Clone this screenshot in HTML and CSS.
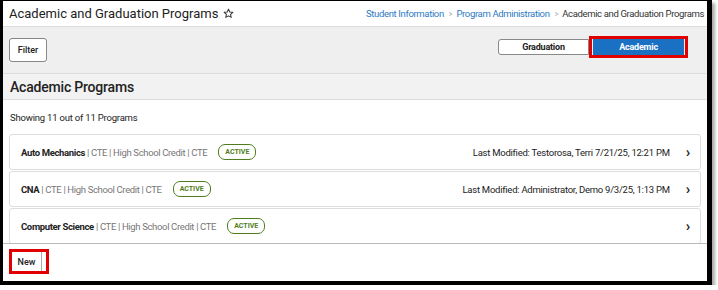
FILE: index.html
```html
<!DOCTYPE html>
<html>
<head>
    <title>Academic and Graduation Programs</title>
    <link rel="stylesheet" href="styles.css">
</head>
<body>
    <div class="frame">
        <div class="page-header">
            <h1 class="page-title">Academic and Graduation Programs
                <svg class="star" width="11" height="11" viewBox="0 0 24 24"><path d="M12 2.5l2.9 6.2 6.6.7-5 4.5 1.4 6.6L12 17.2l-5.9 3.3 1.4-6.6-5-4.5 6.6-.7z" fill="none" stroke="#333" stroke-width="2.2" stroke-linejoin="round"/></svg>
            </h1>
            <div class="crumbs">
                <a href="#">Student Information</a>
                <span class="sep">&gt;</span>
                <a href="#">Program Administration</a>
                <span class="sep">&gt;</span>
                <span class="current">Academic and Graduation Programs</span>
            </div>
        </div>

        <div class="toolbar">
            <button class="btn">Filter</button>
            <div class="toggle">
                <span class="toggle-item">Graduation</span>
                <span class="highlight"><span class="toggle-item active">Academic</span></span>
            </div>
        </div>

        <div class="section-head">Academic Programs</div>

        <div class="list-area">
            <div class="count">Showing 11 out of 11 Programs</div>

            <div class="card">
                <div class="card-left"><b>Auto Mechanics</b> | CTE | High School Credit | CTE <span class="badge">ACTIVE</span></div>
                <div class="card-right">Last Modified: Testorosa, Terri 7/21/25, 12:21 PM <span class="chev">&#x203A;</span></div>
            </div>
            <div class="card">
                <div class="card-left"><b>CNA</b> | CTE | High School Credit | CTE <span class="badge">ACTIVE</span></div>
                <div class="card-right">Last Modified: Administrator, Demo 9/3/25, 1:13 PM <span class="chev">&#x203A;</span></div>
            </div>
            <div class="card">
                <div class="card-left"><b>Computer Science</b> | CTE | High School Credit | CTE <span class="badge">ACTIVE</span></div>
                <div class="card-right"><span class="chev">&#x203A;</span></div>
            </div>
        </div>

        <div class="footer">
            <span class="highlight new-box"><button class="btn new">New</button></span>
        </div>
    </div>
</body>
</html>
```

FILE: styles.css
```css
body {
    margin: 0;
    background: #fff;
    font-family: Roboto, "Liberation Sans", sans-serif;
    color: #222;
}

.frame {
    width: 704px;
    height: 280px;
    border-style: solid;
    border-color: #000;
    border-width: 1px 5px 4px 3px;
    box-shadow: 3px 3px 3px #aaa;
    display: flex;
    flex-direction: column;
    overflow: hidden;
}

.page-header {
    height: 25px;
    border-bottom: 1px solid #ddd;
    display: flex;
    align-items: center;
    justify-content: space-between;
    padding: 0 3px 0 6px;
    flex-shrink: 0;
}

.page-title {
    margin: 0;
    font-size: 13px;
    font-weight: 400;
    color: #222;
    display: flex;
    align-items: center;
    gap: 5px;
}

.crumbs {
    font-size: 9.5px;
    letter-spacing: -0.35px;
    color: #333;
    display: flex;
    gap: 4px;
}

.crumbs a {
    color: #2c7ac3;
    text-decoration: none;
}

.crumbs .sep {
    color: #aaa;
    transform: scaleX(0.7);
}

.toolbar {
    background: #efefef;
    height: 47px;
    border-bottom: 1px solid #ddd;
    display: flex;
    align-items: flex-start;
    justify-content: space-between;
    padding: 11px 19px 0 6px;
    box-sizing: border-box;
    flex-shrink: 0;
}

.btn {
    font-family: Roboto, "Liberation Sans", sans-serif;
    font-size: 9px;
    font-weight: 500;
    color: #222;
    background: #fff;
    border: 1px solid #888;
    border-radius: 3px;
    width: 38px;
    height: 24px;
    padding: 0;
}

.toggle {
    display: flex;
    align-items: center;
    margin-top: -2px;
}

.toggle-item {
    display: flex;
    align-items: center;
    justify-content: center;
    width: 91px;
    height: 16px;
    font-size: 9px;
    font-weight: 700;
    letter-spacing: -0.2px;
    background: #fff;
    border: 1px solid #888;
    border-radius: 3px 0 0 3px;
    box-sizing: border-box;
}

.highlight {
    display: flex;
    border: 3px solid #e00000;
}

.toggle .highlight {
    padding: 0 1px;
}

.toggle-item.active {
    background: #1a70c2;
    border-color: #1a70c2;
    color: #fff;
    border-radius: 0;
}

.section-head {
    background: #f2f2f2;
    height: 25px;
    border-bottom: 1px solid #ddd;
    font-size: 14px;
    font-weight: 500;
    letter-spacing: -0.2px;
    display: flex;
    align-items: center;
    padding-left: 7px;
    flex-shrink: 0;
}

.list-area {
    flex: 1;
    overflow: hidden;
    padding: 0 6px;
    border-bottom: 1px solid #bbb;
}

.count {
    font-size: 9.5px;
    letter-spacing: -0.2px;
    height: 34px;
    display: flex;
    align-items: center;
    padding-left: 1px;
}

.card {
    height: 34px;
    border: 1px solid #ddd;
    border-radius: 3px;
    margin-bottom: 1px;
    display: flex;
    align-items: center;
    justify-content: space-between;
    padding: 0 10px 0 11px;
}

.card-left {
    font-size: 9.5px;
    letter-spacing: -0.35px;
    color: #777;
    display: flex;
    align-items: center;
    white-space: pre;
}

.card-left b {
    color: #222;
    font-weight: 700;
}

.badge {
    margin-left: 9px;
    font-size: 7px;
    font-weight: 700;
    letter-spacing: 0;
    color: #4f7d1d;
    border: 1px solid #4f7d1d;
    border-radius: 7px;
    padding: 3px 6px;
}

.card-right {
    font-size: 9.5px;
    letter-spacing: -0.25px;
    color: #222;
    display: flex;
    align-items: center;
}

.chev {
    font-size: 15px;
    font-weight: 700;
    margin-left: 16px;
    line-height: 10px;
}

.footer {
    height: 37px;
    padding: 5px 0 0 6px;
    box-sizing: border-box;
    flex-shrink: 0;
}

.new-box {
    display: inline-flex;
    width: 34px;
    height: 19px;
}

.btn.new {
    width: 30px;
    height: 19px;
    border-width: 0 1px 0 0;
    border-radius: 0;
    border-color: #aaa;
}
```
